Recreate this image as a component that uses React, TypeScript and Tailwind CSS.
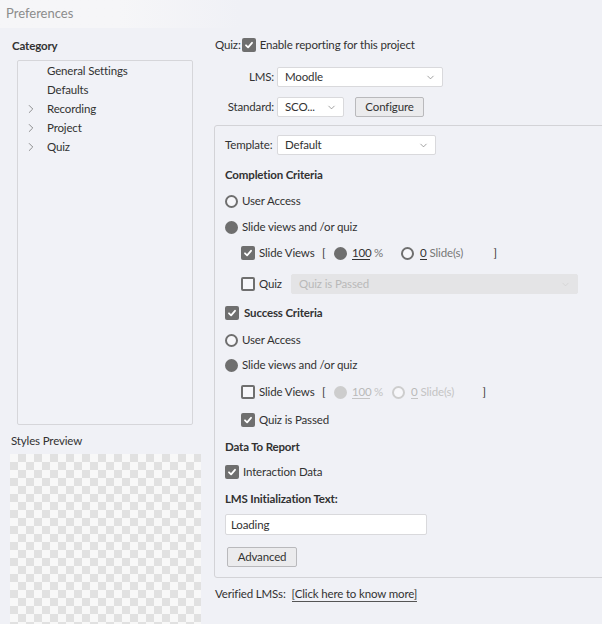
import { ChevronDown, ChevronRight } from "lucide-react";

const FONT = "font-['Lato','Open_Sans',sans-serif]";

function CheckBox({ checked }: { checked: boolean }) {
  if (checked) {
    return (
      <span className="flex h-[14px] w-[14px] shrink-0 items-center justify-center rounded-[2px] bg-[#6f6f6f]">
        <svg viewBox="0 0 10 10" className="h-[10px] w-[10px]">
          <path
            d="M2 5.3 4.1 7.3 8 2.8"
            fill="none"
            stroke="white"
            strokeWidth="1.8"
            strokeLinecap="round"
            strokeLinejoin="round"
          />
        </svg>
      </span>
    );
  }
  return <span className="block h-[14px] w-[14px] shrink-0 rounded-[2px] border-2 border-[#6f6f6f] bg-[#f7f7fa]" />;
}

function Radio({ checked, disabled }: { checked: boolean; disabled?: boolean }) {
  const color = disabled ? "border-[#cdcdcd]" : "border-[#6f6f6f]";
  const fill = disabled ? "bg-[#cdcdcd]" : "bg-[#6f6f6f]";
  return (
    <span
      className={`block h-[13px] w-[13px] shrink-0 rounded-full border-2 ${color} ${checked ? fill : "bg-[#f7f7fa]"}`}
    />
  );
}

function Select({ value, width, disabled }: { value: string; width: string; disabled?: boolean }) {
  return (
    <div
      className={`flex h-[20px] ${width} items-center justify-between rounded-[2px] border pl-[7px] pr-[6px] ${
        disabled ? "border-[#e4e4e6] bg-[#e4e4e6] text-[#b9b9b9]" : "border-[#d9d9dc] bg-white text-[#323232]"
      }`}
    >
      <span>{value}</span>
      <ChevronDown size={11} strokeWidth={1.5} className={disabled ? "text-[#cfcfcf]" : "text-[#777]"} />
    </div>
  );
}

function Button({ label, width }: { label: string; width: string }) {
  return (
    <div
      className={`flex h-[20px] ${width} items-center justify-center rounded-[2px] border border-[#b9b9bc] bg-[#ebebed] text-[#323232]`}
    >
      {label}
    </div>
  );
}

function SlideViewsRow({ checked, disabled, mt }: { checked: boolean; disabled?: boolean; mt: string }) {
  const dim = disabled ? "text-[#b9b9b9]" : "text-[#323232]";
  const uline = disabled ? "border-[#c4c4c4]" : "border-[#323232]";
  return (
    <div className={`flex h-[20px] items-center pl-[16px] ${mt}`}>
      <CheckBox checked={checked} />
      <span className="ml-[4px] w-[63px]">Slide Views</span>
      <span className="w-[12px]">[</span>
      <Radio checked disabled={disabled} />
      <span className={`ml-[5px] w-[18px] border-b leading-[13px] ${uline} ${dim}`}>100</span>
      <span className={`ml-[4px] w-[10px] ${disabled ? "text-[#c4c4c4]" : "text-[#777]"}`}>%</span>
      <span className={`flex ${disabled ? "ml-[8px]" : "ml-[17px]"}`}>
        <Radio checked={false} disabled={disabled} />
      </span>
      <span className={`ml-[6px] border-b leading-[13px] ${uline} ${dim}`}>0</span>
      <span className={`ml-[3px] ${disabled ? "w-[62px] text-[#c4c4c4]" : "w-[64px] text-[#777]"}`}>Slide(s)</span>
      <span className="text-[#323232]">]</span>
    </div>
  );
}

function Row({ children, mt, indent }: { children: React.ReactNode; mt: string; indent?: boolean }) {
  return <div className={`flex h-[20px] items-center gap-[4px] ${indent ? "pl-[16px]" : ""} ${mt}`}>{children}</div>;
}

const categories = [
  { label: "General Settings", expandable: false },
  { label: "Defaults", expandable: false },
  { label: "Recording", expandable: true },
  { label: "Project", expandable: true },
  { label: "Quiz", expandable: true },
];

export default function App() {
  return (
    <div
      className={`h-[624px] w-[602px] overflow-hidden bg-[#f0f1f6] text-[11.5px] tracking-[-0.15px] text-[#323232] ${FONT}`}
    >
      <div className="flex h-[28px] w-[240px] items-center bg-gradient-to-r from-[#f6f6f8] via-[#f6f6f8] to-[#f0f1f6] pl-[6px] text-[13px] tracking-normal text-[#8c8c8c]">
        Preferences
      </div>

      <div className="flex">
        <div className="w-[214px] shrink-0">
          <div className="mt-[8px] flex h-[20px] items-center pl-[12px] font-bold">Category</div>
          <div className="ml-[17px] mt-[4px] h-[365px] w-[176px] rounded-[2px] border border-[#d6d6da] bg-[#f1f2f7]">
            {categories.map((c) => (
              <div key={c.label} className="flex h-[19px] items-center">
                <span className="flex w-[29px] pl-[6px]">
                  {c.expandable && <ChevronRight size={14} strokeWidth={1.3} className="text-[#6f6f6f]" />}
                </span>
                <span>{c.label}</span>
              </div>
            ))}
          </div>
          <div className="mt-[6px] flex h-[20px] items-center pl-[11px]">Styles Preview</div>
          <div className="ml-[10px] mt-[3px] h-[170px] w-[191px] bg-[image:conic-gradient(#e1e1e1_25%,#f8f8f8_0_50%,#e1e1e1_0_75%,#f8f8f8_0)] bg-[length:16px_16px]" />
        </div>

        <div className="flex-1">
          <div className="mt-[7px] flex h-[20px] items-center pl-[1px]">
            <span>Quiz:</span>
            <span className="ml-[1px]">
              <CheckBox checked />
            </span>
            <span className="ml-[4px]">Enable reporting for this project</span>
          </div>
          <div className="mt-[12px] flex items-center">
            <span className="w-[63px] pr-[3px] text-right">LMS:</span>
            <Select value="Moodle" width="w-[166px]" />
          </div>
          <div className="mt-[10px] flex items-center">
            <span className="w-[63px] pr-[3px] text-right">Standard:</span>
            <Select value="SCO..." width="w-[67px]" />
            <span className="ml-[11px]">
              <Button label="Configure" width="w-[69px]" />
            </span>
          </div>

          <div className="mt-[8px] h-[453px] w-[420px] rounded-[3px] border border-[#d3d3d7] pl-[10px] pt-[9px]">
            <div className="flex h-[20px] items-center">
              <span className="w-[52px]">Template:</span>
              <Select value="Default" width="w-[159px]" />
            </div>
            <Row mt="mt-[10px]">
              <span className="font-bold">Completion Criteria</span>
            </Row>
            <Row mt="mt-[6px]">
              <Radio checked={false} />
              <span>User Access</span>
            </Row>
            <Row mt="mt-[6px]">
              <Radio checked />
              <span>Slide views and /or quiz</span>
            </Row>
            <SlideViewsRow checked mt="mt-[6px]" />
            <div className="mt-[11px] flex h-[20px] items-center pl-[16px]">
              <CheckBox checked={false} />
              <span className="ml-[4px] w-[32px]">Quiz</span>
              <Select value="Quiz is Passed" width="w-[287px]" disabled />
            </div>
            <Row mt="mt-[9px]">
              <CheckBox checked />
              <span className="ml-[1px] font-bold">Success Criteria</span>
            </Row>
            <Row mt="mt-[7px]">
              <Radio checked={false} />
              <span>User Access</span>
            </Row>
            <Row mt="mt-[5px]">
              <Radio checked />
              <span>Slide views and /or quiz</span>
            </Row>
            <SlideViewsRow checked={false} disabled mt="mt-[7px]" />
            <Row mt="mt-[8px]" indent>
              <CheckBox checked />
              <span>Quiz is Passed</span>
            </Row>
            <Row mt="mt-[7px]">
              <span className="font-bold">Data To Report</span>
            </Row>
            <Row mt="mt-[5px]">
              <CheckBox checked />
              <span>Interaction Data</span>
            </Row>
            <Row mt="mt-[7px]">
              <span className="font-bold">LMS Initialization Text:</span>
            </Row>
            <div className="mt-[5px] flex h-[21px] w-[202px] items-center rounded-[2px] border border-[#d9d9dc] bg-white pl-[5px]">
              Loading
            </div>
            <div className="mt-[12px] pl-[2px]">
              <Button label="Advanced" width="w-[70px]" />
            </div>
          </div>

          <div className="mt-[6px] flex h-[20px] items-center pl-[1px]">
            <span>Verified LMSs:</span>
            <span className="ml-[6px] border-b border-[#555] leading-[14px]">[Click here to know more]</span>
          </div>
        </div>
      </div>
    </div>
  );
}
